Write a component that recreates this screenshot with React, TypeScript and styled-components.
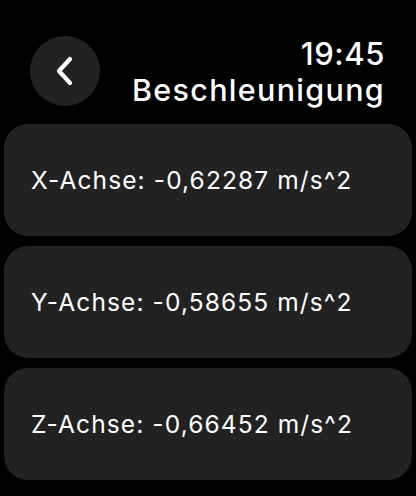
import React from "react";
import styled, { createGlobalStyle } from "styled-components";

const Global = createGlobalStyle`
  html, body { margin: 0; padding: 0; background: #000; }
  body { font-family: Inter, "Noto Sans", sans-serif; color: #fff; -webkit-font-smoothing: antialiased; }
`;

const Screen = styled.div`
  width: 416px;
  height: 496px;
  background: #000;
  display: flex;
  flex-direction: column;
  box-sizing: border-box;
  padding: 36px 4px 0 4px;
  overflow: hidden;
`;

const Header = styled.div`
  display: flex;
  align-items: flex-start;
  justify-content: space-between;
  padding: 0 27px 0 26px;
  height: 78px;
  margin-bottom: 10px;
`;

const BackButton = styled.button`
  width: 70px;
  height: 70px;
  border-radius: 50%;
  border: none;
  background: #222222;
  display: flex;
  align-items: center;
  justify-content: center;
  padding: 0;
  color: #fff;
`;

const TitleBlock = styled.div`
  display: flex;
  flex-direction: column;
  align-items: flex-end;
`;

const Time = styled.div`
  font-size: 31px;
  font-weight: 500;
  line-height: 36px;
  letter-spacing: 0.6px;
`;

const Title = styled.div`
  font-size: 30.5px;
  font-weight: 500;
  line-height: 36px;
  letter-spacing: 1.3px;
`;

const List = styled.div`
  display: flex;
  flex-direction: column;
  gap: 10px;
`;

const Card = styled.div`
  height: 112px;
  border-radius: 24px;
  background: #222222;
  display: flex;
  align-items: center;
  padding-left: 27px;
  font-size: 24.5px;
  font-weight: 400;
  letter-spacing: 1.1px;
`;

const values = [
  "X-Achse: -0,62287 m/s^2",
  "Y-Achse: -0,58655 m/s^2",
  "Z-Achse: -0,66452 m/s^2",
];

export default function App() {
  return (
    <>
      <Global />
      <Screen>
        <Header>
          <BackButton aria-label="Zurück">
            <svg width="22" height="32" viewBox="0 0 22 32">
              <path d="M16 4 L5 16 L16 28" fill="none" stroke="#fff" strokeWidth="4.2" strokeLinecap="round" strokeLinejoin="round" />
            </svg>
          </BackButton>
          <TitleBlock>
            <Time>19:45</Time>
            <Title>Beschleunigung</Title>
          </TitleBlock>
        </Header>
        <List>
          {values.map((v) => (
            <Card key={v}>{v}</Card>
          ))}
        </List>
      </Screen>
    </>
  );
}
